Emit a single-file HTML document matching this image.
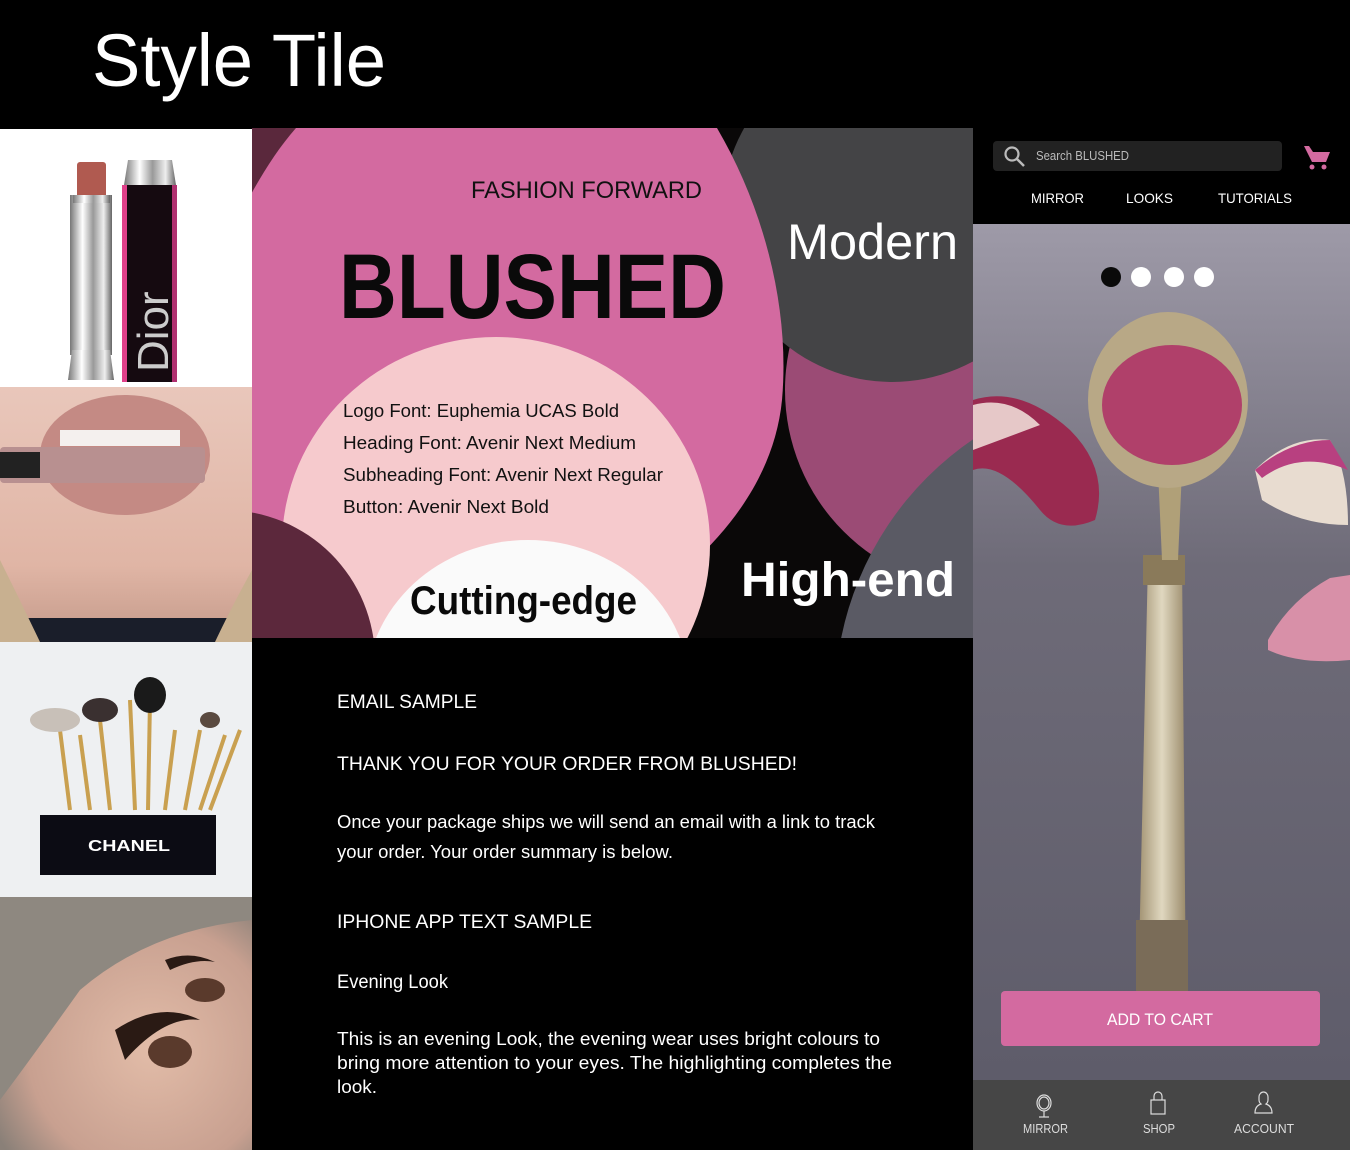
<!DOCTYPE html>
<html><head><meta charset="utf-8"><style>
html,body{margin:0;padding:0;background:#000;}
svg{display:block;}
text{font-family:"Liberation Sans",sans-serif;}
</style></head><body>
<svg width="1350" height="1150" viewBox="0 0 1350 1150" xmlns="http://www.w3.org/2000/svg">
<defs>
<linearGradient id="silver" x1="0" x2="1"><stop offset="0" stop-color="#777"/><stop offset=".3" stop-color="#fff"/><stop offset=".55" stop-color="#999"/><stop offset=".8" stop-color="#eee"/><stop offset="1" stop-color="#666"/></linearGradient>
<linearGradient id="skin" x1="0" y1="0" x2="0" y2="1"><stop offset="0" stop-color="#e9c7bb"/><stop offset=".7" stop-color="#e0b5a5"/><stop offset="1" stop-color="#c49a8a"/></linearGradient>
<linearGradient id="photo" x1="0" y1="0" x2="0" y2="1"><stop offset="0" stop-color="#9e9aa8"/><stop offset=".4" stop-color="#6e6b78"/><stop offset="1" stop-color="#5e5c6a"/></linearGradient>
<linearGradient id="handle" x1="0" x2="1"><stop offset="0" stop-color="#a09070"/><stop offset=".5" stop-color="#e0d8c0"/><stop offset="1" stop-color="#9a8a6a"/></linearGradient>
<radialGradient id="face" cx=".6" cy=".6" r=".7"><stop offset="0" stop-color="#e2bca8"/><stop offset=".7" stop-color="#c8a090"/><stop offset="1" stop-color="#8a8078"/></radialGradient>
<clipPath id="cc"><rect x="252" y="128" width="721" height="510"/></clipPath>
</defs>
<rect width="1350" height="1150" fill="#000"/>
<text x="92" y="86" font-size="74" fill="#fff" textLength="294" lengthAdjust="spacingAndGlyphs">Style Tile</text>

<!-- tile 1 -->
<rect x="0" y="129" width="252" height="258" fill="#fff"/>
<rect x="70" y="195" width="42" height="160" fill="url(#silver)"/>
<rect x="77" y="162" width="29" height="36" rx="3" fill="#b05a50"/>
<rect x="73" y="195" width="37" height="8" fill="url(#silver)"/>
<path d="M72 350 L110 350 L114 380 L68 380 Z" fill="url(#silver)"/>
<rect x="122" y="185" width="55" height="197" fill="#150a10"/>
<rect x="122" y="185" width="5" height="197" fill="#e0408a"/>
<rect x="172" y="185" width="5" height="197" fill="#b03070"/>
<path d="M128 160 h44 l4 25 h-52 z" fill="url(#silver)"/>
<text x="0" y="0" font-family="Liberation Serif" font-size="44" fill="#ccc" transform="translate(168,372) rotate(-90)">Dior</text>

<!-- tile 2 -->
<rect x="0" y="387" width="252" height="255" fill="url(#skin)"/>
<ellipse cx="125" cy="455" rx="85" ry="60" fill="#c48a84"/>
<rect x="60" y="430" width="120" height="16" fill="#f4f0ee"/>
<rect x="0" y="447" width="205" height="36" rx="4" fill="#b89090"/>
<rect x="0" y="452" width="40" height="26" fill="#222"/>
<rect x="0" y="618" width="252" height="24" fill="#1a1e2a"/>
<path d="M0 560 Q20 600 40 642 L0 642Z" fill="#c8b090"/>
<path d="M252 570 Q230 610 215 642 L252 642Z" fill="#c8b090"/>

<!-- tile 3 -->
<rect x="0" y="642" width="252" height="255" fill="#eef0f2"/>
<g stroke="#c9a050" stroke-width="4">
<line x1="60" y1="730" x2="70" y2="810"/><line x1="80" y1="735" x2="90" y2="810"/><line x1="100" y1="720" x2="110" y2="810"/>
<line x1="130" y1="700" x2="135" y2="810"/><line x1="150" y1="700" x2="148" y2="810"/><line x1="175" y1="730" x2="165" y2="810"/>
<line x1="200" y1="730" x2="185" y2="810"/><line x1="225" y1="735" x2="200" y2="810"/><line x1="240" y1="730" x2="210" y2="810"/></g>
<ellipse cx="150" cy="695" rx="16" ry="18" fill="#1a1a1a"/>
<ellipse cx="100" cy="710" rx="18" ry="12" fill="#3a3030"/>
<ellipse cx="55" cy="720" rx="25" ry="12" fill="#c8c0b8"/>
<ellipse cx="210" cy="720" rx="10" ry="8" fill="#5a4a40"/>
<rect x="40" y="815" width="176" height="60" fill="#0c0c14"/>
<text x="88" y="851" font-size="16" font-weight="bold" fill="#fff" textLength="82" lengthAdjust="spacingAndGlyphs">CHANEL</text>

<!-- tile 4 -->
<rect x="0" y="897" width="252" height="253" fill="url(#face)"/>
<path d="M0 897 H252 V920 Q150 930 80 990 Q30 1060 0 1100Z" fill="#8e8880"/>
<path d="M115 1030 Q160 1000 200 1020 Q165 1015 125 1060Z" fill="#2a1a14"/>
<ellipse cx="170" cy="1052" rx="22" ry="16" fill="#5a3a2c"/>
<path d="M165 960 Q190 950 215 962 Q195 958 170 970Z" fill="#2a1a14"/>
<ellipse cx="205" cy="990" rx="20" ry="12" fill="#5a3a2c"/>

<!-- center panel -->
<g clip-path="url(#cc)">
<rect x="252" y="128" width="721" height="510" fill="#0a0808"/>
<path d="M252 128 L300 128 L252 200Z" fill="#5a283c"/>
<circle cx="985" cy="390" r="200" fill="#9b4b75"/>
<circle cx="1150" cy="700" r="315" fill="#5a5a64"/>
<circle cx="892" cy="212" r="170" fill="#444446"/>
<path d="M296 128 L717 128 C765 210 790 310 782 400 C776 460 745 515 690 565 L500 640 L240 640 L240 215 C258 180 275 152 296 128 Z" fill="#d36aa0"/>
<ellipse cx="496" cy="545" rx="214" ry="208" fill="#f6cacd"/>
<circle cx="225" cy="660" r="150" fill="#5c283c"/>
<ellipse cx="528" cy="690" rx="162" ry="150" fill="#fafafa"/>
</g>
<text x="471" y="198" font-size="24" fill="#111" textLength="231" lengthAdjust="spacingAndGlyphs">FASHION FORWARD</text>
<text x="339" y="318" font-size="92" font-weight="bold" fill="#0a0a0a" textLength="387" lengthAdjust="spacingAndGlyphs">BLUSHED</text>
<text x="787" y="259" font-size="50" fill="#fff" textLength="171" lengthAdjust="spacingAndGlyphs">Modern</text>
<g font-size="18" fill="#111">
<text x="343" y="417" textLength="276" lengthAdjust="spacingAndGlyphs">Logo Font: Euphemia UCAS Bold</text>
<text x="343" y="449" textLength="293" lengthAdjust="spacingAndGlyphs">Heading Font: Avenir Next Medium</text>
<text x="343" y="481" textLength="320" lengthAdjust="spacingAndGlyphs">Subheading Font: Avenir Next Regular</text>
<text x="343" y="513" textLength="206" lengthAdjust="spacingAndGlyphs">Button: Avenir Next Bold</text>
</g>
<text x="410" y="614" font-size="40" font-weight="bold" fill="#0a0a0a" textLength="227" lengthAdjust="spacingAndGlyphs">Cutting-edge</text>
<text x="741" y="596" font-size="48" font-weight="bold" fill="#fff" textLength="214" lengthAdjust="spacingAndGlyphs">High-end</text>

<!-- email text -->
<g fill="#fff" font-size="19">
<text x="337" y="708" textLength="140" lengthAdjust="spacingAndGlyphs">EMAIL SAMPLE</text>
<text x="337" y="770" textLength="460" lengthAdjust="spacingAndGlyphs">THANK YOU FOR YOUR ORDER FROM BLUSHED!</text>
<text x="337" y="828" font-size="18" textLength="538" lengthAdjust="spacingAndGlyphs">Once your package ships we will send an email with a link to track</text>
<text x="337" y="858" font-size="18" textLength="336" lengthAdjust="spacingAndGlyphs">your order. Your order summary is below.</text>
<text x="337" y="928" textLength="255" lengthAdjust="spacingAndGlyphs">IPHONE APP TEXT  SAMPLE</text>
<text x="337" y="988" textLength="111" lengthAdjust="spacingAndGlyphs">Evening Look</text>
<text x="337" y="1045" font-size="18" textLength="543" lengthAdjust="spacingAndGlyphs">This is an evening Look, the evening wear uses bright colours to</text>
<text x="337" y="1069" font-size="18" textLength="555" lengthAdjust="spacingAndGlyphs">bring more attention to your eyes. The highlighting completes the</text>
<text x="337" y="1093" font-size="18" textLength="40" lengthAdjust="spacingAndGlyphs">look.</text>
</g>

<!-- right panel -->
<rect x="973" y="128" width="377" height="96" fill="#000"/>
<rect x="993" y="141" width="289" height="30" rx="4" fill="#222"/>
<circle cx="1012" cy="154" r="6.5" fill="none" stroke="#bbb" stroke-width="2.2"/>
<line x1="1017" y1="159" x2="1024" y2="166" stroke="#bbb" stroke-width="2.5"/>
<text x="1036" y="160" font-size="12.5" fill="#bbb" textLength="93" lengthAdjust="spacingAndGlyphs">Search BLUSHED</text>
<path d="M1304 146 h5 l4 6 h17 l-4 10 h-14 z" fill="#d36aa0"/>
<circle cx="1312" cy="167" r="2.5" fill="#d36aa0"/><circle cx="1324" cy="167" r="2.5" fill="#d36aa0"/>
<g font-size="14" fill="#fff">
<text x="1031" y="203" textLength="53" lengthAdjust="spacingAndGlyphs">MIRROR</text>
<text x="1126" y="203" textLength="47" lengthAdjust="spacingAndGlyphs">LOOKS</text>
<text x="1218" y="203" textLength="74" lengthAdjust="spacingAndGlyphs">TUTORIALS</text>
</g>
<rect x="973" y="224" width="377" height="856" fill="url(#photo)"/>
<!-- spoon -->
<path d="M1148 560 L1182 560 L1186 1000 L1138 1000 Z" fill="url(#handle)"/>
<rect x="1143" y="555" width="42" height="30" fill="#8a7a5a"/>
<rect x="1136" y="920" width="52" height="80" fill="#7a6c58"/>
<path d="M1158 470 L1182 470 L1178 560 L1162 560 Z" fill="#b0a078"/>
<ellipse cx="1168" cy="400" rx="80" ry="88" fill="#b8a886"/>
<ellipse cx="1172" cy="405" rx="70" ry="60" fill="#b0406a"/>
<!-- petals -->
<path d="M973 400 Q1020 385 1070 430 Q1110 470 1095 520 Q1060 535 1040 510 Q1000 460 973 470Z" fill="#9a2a50"/>
<path d="M973 405 Q1010 395 1040 425 Q1000 440 973 450Z" fill="#e6c8c8"/>
<path d="M1255 470 Q1290 435 1330 440 Q1348 470 1348 525 Q1300 525 1262 500Z" fill="#e8dcd0"/>
<path d="M1255 470 Q1290 440 1330 440 L1348 470 Q1300 450 1262 478Z" fill="#b84080"/>
<path d="M1268 640 Q1290 600 1330 578 L1350 575 L1350 660 Q1300 665 1268 650Z" fill="#d890a8"/>
<circle cx="1111" cy="277" r="10" fill="#0a0a0a"/>
<circle cx="1141" cy="277" r="10" fill="#fff"/>
<circle cx="1174" cy="277" r="10" fill="#fff"/>
<circle cx="1204" cy="277" r="10" fill="#fff"/>
<rect x="1001" y="991" width="319" height="55" rx="4" fill="#d36aa0"/>
<text x="1107" y="1025" font-size="17" fill="#fff" textLength="106" lengthAdjust="spacingAndGlyphs">ADD TO CART</text>
<rect x="973" y="1080" width="377" height="70" fill="#464646"/>
<g fill="none" stroke="#ddd" stroke-width="1.2">
<ellipse cx="1044" cy="1103" rx="7" ry="8"/><ellipse cx="1044" cy="1103" rx="5" ry="6"/>
<line x1="1044" y1="1111" x2="1044" y2="1117"/><line x1="1039" y1="1117" x2="1049" y2="1117"/>
<rect x="1151" y="1100" width="14" height="14"/><path d="M1154 1100 v-4 a4 4 0 0 1 8 0 v4"/>
<path d="M1259 1097 a4.5 5 0 0 1 9 0 v3 a4 5 0 0 1 -2 4 q6 2 6 9 h-17 q0 -7 6 -9 a4 5 0 0 1 -2 -4z"/>
</g>
<g font-size="12.5" fill="#ddd">
<text x="1023" y="1133" textLength="45" lengthAdjust="spacingAndGlyphs">MIRROR</text>
<text x="1143" y="1133" textLength="32" lengthAdjust="spacingAndGlyphs">SHOP</text>
<text x="1234" y="1133" textLength="60" lengthAdjust="spacingAndGlyphs">ACCOUNT</text>
</g>
</svg>
</body></html>
